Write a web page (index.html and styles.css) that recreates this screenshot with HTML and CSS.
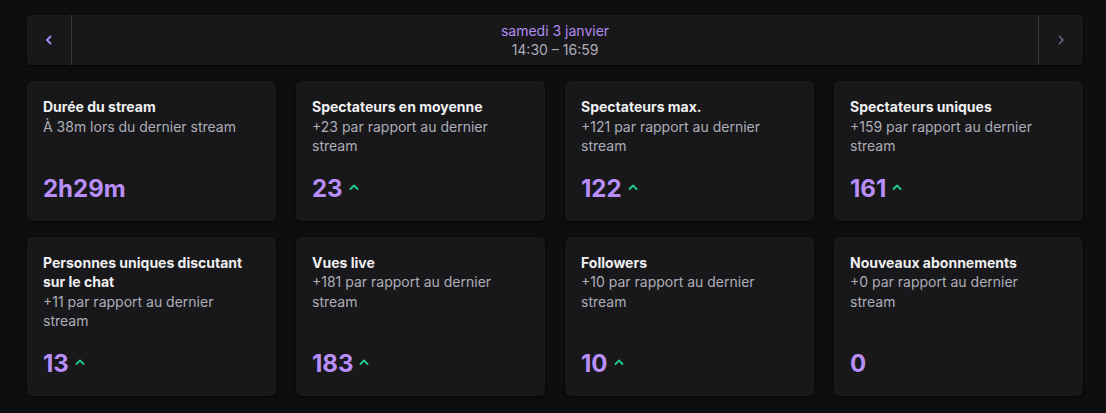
FILE: index.html
```html
<!DOCTYPE html>
<html lang="fr">
<head>
<meta charset="utf-8">
<title>Statistiques du stream</title>
<link rel="stylesheet" href="styles.css">
</head>
<body>
<main class="page">
  <nav class="stream-nav">
    <button class="nav-btn nav-prev" aria-label="Stream précédent">
      <svg width="8" height="10" viewBox="0 0 8 10"><path d="M5.5 1.5 L2 5 L5.5 8.5" fill="none" stroke="currentColor" stroke-width="1.8" stroke-linecap="round" stroke-linejoin="round"/></svg>
    </button>
    <div class="nav-center">
      <div class="nav-date">samedi 3 janvier</div>
      <div class="nav-time">14:30 – 16:59</div>
    </div>
    <button class="nav-btn nav-next" aria-label="Stream suivant">
      <svg width="8" height="10" viewBox="0 0 8 10"><path d="M2.5 1.5 L6 5 L2.5 8.5" fill="none" stroke="currentColor" stroke-width="1.5" stroke-linecap="round" stroke-linejoin="round"/></svg>
    </button>
  </nav>

  <section class="stats">
    <article class="card">
      <div class="card-head">
        <h3 class="card-title">Durée du stream</h3>
        <p class="card-sub">À 38m lors du dernier stream</p>
      </div>
      <div class="card-value"><span>2h29m</span></div>
    </article>
    <article class="card">
      <div class="card-head">
        <h3 class="card-title">Spectateurs en moyenne</h3>
        <p class="card-sub">+23 par rapport au dernier stream</p>
      </div>
      <div class="card-value"><span>23</span><svg class="up" width="10" height="6" viewBox="0 0 10 6"><path d="M1.5 5 L5 1.5 L8.5 5" fill="none" stroke="currentColor" stroke-width="1.8" stroke-linecap="round" stroke-linejoin="round"/></svg></div>
    </article>
    <article class="card">
      <div class="card-head">
        <h3 class="card-title">Spectateurs max.</h3>
        <p class="card-sub">+121 par rapport au dernier stream</p>
      </div>
      <div class="card-value"><span>122</span><svg class="up" width="10" height="6" viewBox="0 0 10 6"><path d="M1.5 5 L5 1.5 L8.5 5" fill="none" stroke="currentColor" stroke-width="1.8" stroke-linecap="round" stroke-linejoin="round"/></svg></div>
    </article>
    <article class="card">
      <div class="card-head">
        <h3 class="card-title">Spectateurs uniques</h3>
        <p class="card-sub">+159 par rapport au dernier stream</p>
      </div>
      <div class="card-value"><span>161</span><svg class="up" width="10" height="6" viewBox="0 0 10 6"><path d="M1.5 5 L5 1.5 L8.5 5" fill="none" stroke="currentColor" stroke-width="1.8" stroke-linecap="round" stroke-linejoin="round"/></svg></div>
    </article>

    <article class="card">
      <div class="card-head">
        <h3 class="card-title">Personnes uniques discutant sur le chat</h3>
        <p class="card-sub">+11 par rapport au dernier stream</p>
      </div>
      <div class="card-value"><span>13</span><svg class="up" width="10" height="6" viewBox="0 0 10 6"><path d="M1.5 5 L5 1.5 L8.5 5" fill="none" stroke="currentColor" stroke-width="1.8" stroke-linecap="round" stroke-linejoin="round"/></svg></div>
    </article>
    <article class="card">
      <div class="card-head">
        <h3 class="card-title">Vues live</h3>
        <p class="card-sub">+181 par rapport au dernier stream</p>
      </div>
      <div class="card-value"><span>183</span><svg class="up" width="10" height="6" viewBox="0 0 10 6"><path d="M1.5 5 L5 1.5 L8.5 5" fill="none" stroke="currentColor" stroke-width="1.8" stroke-linecap="round" stroke-linejoin="round"/></svg></div>
    </article>
    <article class="card">
      <div class="card-head">
        <h3 class="card-title">Followers</h3>
        <p class="card-sub">+10 par rapport au dernier stream</p>
      </div>
      <div class="card-value"><span>10</span><svg class="up" width="10" height="6" viewBox="0 0 10 6"><path d="M1.5 5 L5 1.5 L8.5 5" fill="none" stroke="currentColor" stroke-width="1.8" stroke-linecap="round" stroke-linejoin="round"/></svg></div>
    </article>
    <article class="card">
      <div class="card-head">
        <h3 class="card-title">Nouveaux abonnements</h3>
        <p class="card-sub">+0 par rapport au dernier stream</p>
      </div>
      <div class="card-value"><span>0</span></div>
    </article>
  </section>
</main>
</body>
</html>
```

FILE: styles.css
```css
* { box-sizing: border-box; }

html, body {
  margin: 0;
  padding: 0;
  background: #0e0e10;
}

body {
  font-family: Inter, "Noto Sans", "Liberation Sans", sans-serif;
  font-size: 14px;
  line-height: 19.5px;
  color: #efeff1;
}

.page {
  padding: 15px 23px 16px 27px;
  display: flex;
  flex-direction: column;
  gap: 16px;
}

.stream-nav {
  display: flex;
  height: 50px;
  background: #18181b;
  border-radius: 2px;
  box-shadow: 0 1px 3px rgba(0, 0, 0, 0.7);
}

.nav-btn {
  width: 45px;
  flex: none;
  border: none;
  background: transparent;
  padding: 0;
  display: flex;
  align-items: center;
  justify-content: center;
  cursor: pointer;
}

.nav-prev {
  color: #b08cf7;
  border-right: 1px solid #3a3a3e;
}

.nav-next {
  color: #6f6686;
  border-left: 1px solid #3a3a3e;
}

.nav-center {
  flex: 1;
  display: flex;
  flex-direction: column;
  align-items: center;
  justify-content: center;
  line-height: 19px;
}

.nav-date { color: #b18cf0; }
.nav-time { color: #adadb8; }

.stats {
  display: grid;
  grid-template-columns: repeat(4, 1fr);
  column-gap: 20px;
  row-gap: 16px;
}

.card {
  background: #18181b;
  border-radius: 5px;
  box-shadow: 0 1px 3px rgba(0, 0, 0, 0.75);
  padding: 16px;
  display: flex;
  flex-direction: column;
  justify-content: space-between;
}

.card-title {
  margin: 0;
  font-size: 14px;
  font-weight: 700;
  line-height: 19.5px;
  color: #efeff1;
}

.card-sub {
  margin: 0;
  font-size: 14px;
  line-height: 19.5px;
  color: #adadb8;
}

.card-value {
  margin-top: 17px;
  display: flex;
  align-items: center;
  gap: 6px;
  height: 32px;
  font-size: 24px;
  font-weight: 700;
  line-height: 32px;
  color: #b98ef8;
}

.up {
  color: #1fcb8f;
  margin-top: -4px;
}
```
